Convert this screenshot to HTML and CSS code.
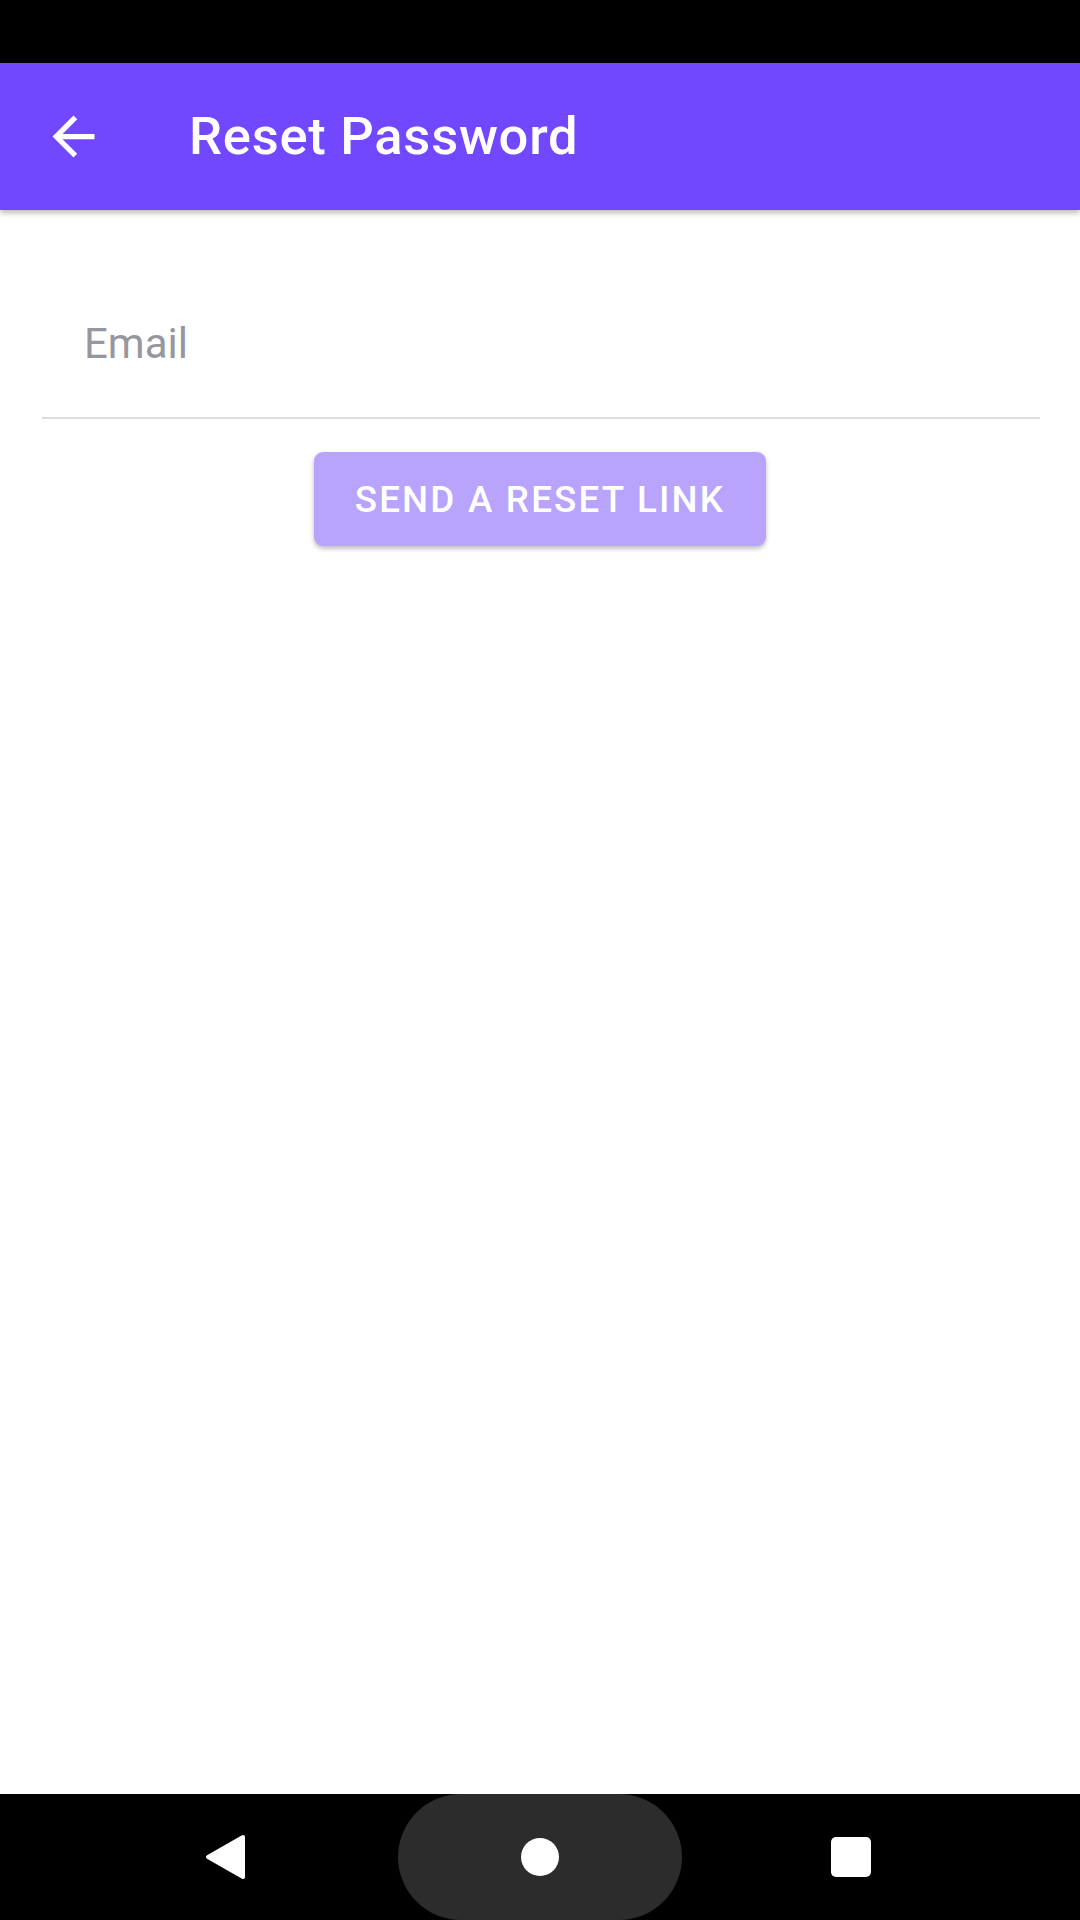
FILE: index.html
```html
<!DOCTYPE html>
<html>
<head>
<meta charset="utf-8">
<link rel="stylesheet" href="styles.css">
</head>
<body>
<div class="screen">
  <div class="status-bar"></div>
  <header class="app-bar">
    <svg class="back-icon" viewBox="0 0 24 24" width="63" height="63"><path fill="#ffffff" d="M20 11H7.83l5.59-5.59L12 4l-8 8 8 8 1.41-1.41L7.83 13H20v-2z"/></svg>
    <h1 class="title">Reset Password</h1>
  </header>
  <main class="content">
    <div class="field">
      <span class="hint">Email</span>
    </div>
    <div class="actions">
      <button class="reset-btn">SEND A RESET LINK</button>
    </div>
  </main>
  <nav class="nav-bar">
    <div class="nav-cell back-cell">
      <svg width="44" height="48" viewBox="0 0 44 48"><polygon points="41,4 6,24 41,44" fill="#fff" stroke="#fff" stroke-width="4" stroke-linejoin="round"/></svg>
    </div>
    <div class="home-pill"><span class="home-dot"></span></div>
    <div class="nav-cell recents-cell"><span class="recents-square"></span></div>
  </nav>
</div>
</body>
</html>
```

FILE: styles.css
```css
html, body {
  margin: 0;
  padding: 0;
  background: #ffffff;
}
.screen {
  width: 1080px;
  height: 1920px;
  display: flex;
  flex-direction: column;
  font-family: Roboto, "Noto Sans", sans-serif;
  overflow: hidden;
}
.status-bar {
  height: 63px;
  background: #000000;
  flex: none;
}
.app-bar {
  height: 147px;
  flex: none;
  background: #7147ff;
  display: flex;
  align-items: center;
  box-shadow: 0 3px 5px rgba(0,0,0,0.22), 0 1px 10px rgba(0,0,0,0.08);
  position: relative;
  z-index: 2;
}
.back-icon {
  margin-left: 42px;
  flex: none;
}
.title {
  margin: 0 0 0 84px;
  color: #ffffff;
  font-size: 52.5px;
  font-weight: 500;
  letter-spacing: 0.75px;
  line-height: 1;
}
.content {
  flex: 1;
  display: flex;
  flex-direction: column;
}
.field {
  margin: 0 40px 0 42px;
  padding: 113px 0 52px 42px;
  border-bottom: 2px solid #dcdcde;
}
.hint {
  display: block;
  font-size: 42px;
  line-height: 42px;
  color: #96979e;
}
.actions {
  display: flex;
  justify-content: center;
  padding-top: 33px;
}
.reset-btn {
  height: 94px;
  width: 452px;
  padding: 0;
  border: none;
  border-radius: 9px;
  background: #b8a3fd;
  color: #ffffff;
  font-family: Roboto, "Noto Sans", sans-serif;
  font-size: 36.75px;
  font-weight: 500;
  letter-spacing: 2.2px;
  box-shadow: 0 3px 4px rgba(0,0,0,0.2), 0 1px 6px rgba(0,0,0,0.08);
  display: flex;
  align-items: center;
  justify-content: center;
}
.nav-bar {
  height: 126px;
  flex: none;
  background: #000000;
  display: flex;
  align-items: center;
  padding-left: 165px;
}
.nav-cell {
  width: 120px;
  height: 126px;
  display: flex;
  align-items: center;
  justify-content: center;
}
.back-cell svg {
  margin-left: -2px;
}
.home-pill {
  width: 284px;
  height: 126px;
  border-radius: 63px;
  background: #2c2c2c;
  margin-left: 113px;
  display: flex;
  align-items: center;
  justify-content: center;
}
.home-dot {
  width: 38px;
  height: 38px;
  border-radius: 50%;
  background: #ffffff;
}
.recents-cell {
  margin-left: 109px;
}
.recents-square {
  width: 40px;
  height: 40px;
  border-radius: 5px;
  background: #ffffff;
}
```
